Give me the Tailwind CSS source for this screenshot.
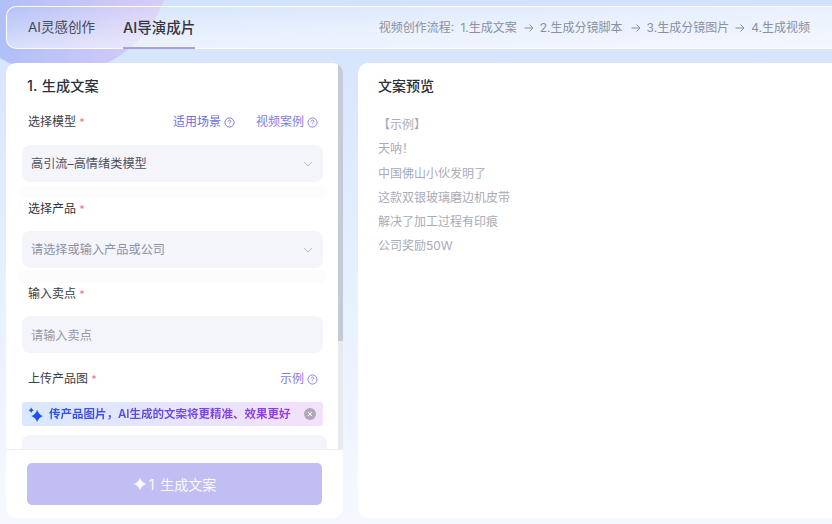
<!doctype html>
<html lang="zh"><head><meta charset="utf-8">
<script src="https://cdn.jsdelivr.net/npm/@tailwindcss/browser@4"></script>
</head>
<body class="m-0">
<div class="relative w-[832px] h-[524px] overflow-hidden bg-gradient-to-b from-[#d3e2fd] via-[#e6effe] to-[#f6f8ff] font-['Inter','Noto_Sans_CJK_SC',sans-serif] text-[12px] text-[#3a3d4a]">
  <div class="absolute left-[-55px] top-[-152px] w-[226px] h-[226px] rounded-full bg-gradient-to-r from-[#a2bbf8] to-[#d9cdf8]"></div>
  <div class="relative flex flex-col pl-[6px] pt-[6px] gap-[14px] h-full">
    <header class="flex items-center justify-between w-[840px] h-[43px] pl-[21px] pr-[36px] rounded-l-[10px] border border-r-0 border-white/90 bg-gradient-to-br from-white/5 via-white/50 to-white/70">
      <nav class="flex gap-[28px] h-full">
        <a class="flex items-center text-[13.5px] text-[#474a58]">AI灵感创作</a>
        <a class="relative flex items-center text-[14.5px] font-medium text-[#33353f]">AI导演成片<span class="absolute left-0 right-0 bottom-[-1px] h-[2px] bg-[#a3a1ec]"></span></a>
      </nav>
      <p class="flex items-center gap-[6px] text-[12px] text-[#8b8f9f]">
        <span class="[word-spacing:3px]">视频创作流程: 1.生成文案</span>
        <svg class="w-[10px] h-[10px] ml-[1px]" viewBox="0 0 10 10" fill="none" stroke="currentColor"><path d="M.5 5h8.500M5.500 1.500 9 5 5.500 8.500"/></svg>
        <span>2.生成分镜脚本</span>
        <svg class="w-[10px] h-[10px] ml-[2px]" viewBox="0 0 10 10" fill="none" stroke="currentColor"><path d="M.5 5h8.500M5.500 1.500 9 5 5.500 8.500"/></svg>
        <span>3.生成分镜图片</span>
        <svg class="w-[10px] h-[10px]" viewBox="0 0 10 10" fill="none" stroke="currentColor"><path d="M.5 5h8.500M5.500 1.500 9 5 5.500 8.500"/></svg>
        <span>4.生成视频</span>
      </p>
    </header>
    <main class="flex gap-[15px] w-[840px] h-[455px]">
      <section class="relative flex flex-col w-[337px] shrink-0 rounded-[10px] bg-white overflow-hidden">
        <div class="absolute right-0 top-0 w-[5px] h-[386px] bg-[#e7e9ee]"><div class="w-full h-[278px] bg-[#c5cad8]"></div></div>
        <div class="h-[386px] overflow-hidden pl-[16px] pr-[20px]">
          <h2 class="pl-[5px] pt-[14px] h-[44px] text-[14.200px] font-medium leading-[18px] text-[#2c2e38] [word-spacing:1px]">1. 生成文案</h2>
          <div class="flex justify-between items-center pl-[6px] pr-[5px] pt-[2px] h-[28px]">
            <span>选择模型 <span class="text-[#f56c6c] text-[10px]">*</span></span>
            <span class="flex gap-[21px] text-[12px] text-[#6d6ce0]">
              <span class="flex items-center gap-[3px]">适用场景<svg class="w-[11px] h-[11px]" viewBox="0 0 12 12" fill="none" stroke="currentColor"><circle cx="6" cy="6" r="5"/><path d="M4.600 4.800a1.400 1.400 0 1 1 2.200 1.100c-.5.3-.8.6-.8 1.100M6 8.600v.4"/></svg></span>
              <span class="flex items-center gap-[3px] text-[#7f7de6]">视频案例<svg class="w-[11px] h-[11px]" viewBox="0 0 12 12" fill="none" stroke="currentColor"><circle cx="6" cy="6" r="5"/><path d="M4.600 4.800a1.400 1.400 0 1 1 2.200 1.100c-.5.3-.8.6-.8 1.100M6 8.600v.4"/></svg></span>
            </span>
          </div>
          <div class="mt-[10px] flex items-center justify-between h-[37px] pl-[9px] pr-[10px] pt-[2px] rounded-[8px] bg-[#f4f5fb] text-[#4d5060] text-[12.200px]">
            <span>高引流–高情绪类模型</span>
            <svg class="w-[10px] h-[6px] text-[#b8bbc8] -mt-[2px]" viewBox="0 0 10 6" fill="none" stroke="currentColor"><path d="M1 .8 5 5 9 .8"/></svg>
          </div>
          <div class="mt-[4px] -mx-[4px] h-[12px] rounded-[8px] bg-[#fcfcfd]"></div>
          <div class="flex items-center pl-[6px] pt-[2px] h-[20px] text-[#33353f]"><span>选择产品 <span class="text-[#f56c6c] text-[10px]">*</span></span></div>
          <div class="mt-[13px] flex items-center justify-between h-[37px] pl-[9px] pr-[10px] pt-[2px] rounded-[8px] bg-[#f4f5fb] text-[#8e91a3] text-[12.200px]">
            <span>请选择或输入产品或公司</span>
            <svg class="w-[10px] h-[6px] text-[#b8bbc8] -mt-[2px]" viewBox="0 0 10 6" fill="none" stroke="currentColor"><path d="M1 .8 5 5 9 .8"/></svg>
          </div>
          <div class="mt-[2px] -mx-[4px] h-[13px] rounded-[8px] bg-[#fcfcfd]"></div>
          <div class="flex items-center pl-[6px] pt-[2px] h-[20px]"><span>输入卖点 <span class="text-[#f56c6c] text-[10px]">*</span></span></div>
          <div class="mt-[13px] flex items-center h-[37px] pl-[9px] pt-[3px] rounded-[8px] bg-[#f4f5fb] text-[#9497a8] text-[12.200px]">请输入卖点</div>
          <div class="mt-[16px] flex justify-between items-center pl-[6px] pr-[5px] h-[20px]">
            <span>上传产品图 <span class="text-[#f56c6c] text-[10px]">*</span></span>
            <span class="flex items-center gap-[3px] text-[12px] text-[#7f7de6]">示例<svg class="w-[11px] h-[11px]" viewBox="0 0 12 12" fill="none" stroke="currentColor"><circle cx="6" cy="6" r="5"/><path d="M4.600 4.800a1.400 1.400 0 1 1 2.200 1.100c-.5.3-.8.6-.8 1.100M6 8.600v.4"/></svg></span>
          </div>
          <div class="mt-[13px] flex items-center justify-between h-[24px] pl-[6px] pr-[7px] rounded-[3px] bg-gradient-to-r from-[#d9e8ff] to-[#f3e0fd]">
            <span class="flex items-center gap-[6px]">
              <svg class="w-[15px] h-[15px] text-[#1f4ff0]" viewBox="0 0 14 14" fill="currentColor"><path d="M8.500 2.500Q9.900 7.100 14 8.500 9.900 9.900 8.500 14 7.100 9.900 3 8.500 7.100 7.100 8.500 2.500Z"/><path d="M3 .5Q3.500 2.500 5.500 3 3.500 3.500 3 5.500 2.500 3.500.5 3 2.500 2.500 3 .5Z"/></svg>
              <span class="pt-[1px] text-[11.500px] font-semibold text-transparent bg-clip-text bg-gradient-to-r from-[#2450ee] to-[#9a35e8]">传产品图片，AI生成的文案将更精准、效果更好</span>
            </span>
            <span class="flex items-center justify-center w-[12px] h-[12px] rounded-full bg-[#aeaab8] text-white"><svg class="w-[6px] h-[6px]" viewBox="0 0 6 6" stroke="currentColor"><path d="m1 1 4 4M5 1 1 5"/></svg></span>
          </div>
          <div class="mt-[9px] -mr-[4px] h-[40px] rounded-[8px] bg-[#f4f5fb]"></div>
        </div>
        <footer class="relative flex-1 border-t border-[#eef0f4] bg-white pl-[21px] pr-[21px] pt-[13px]">
          <button class="flex items-center justify-center gap-[2px] w-[295px] h-[42px] rounded-[5px] bg-[#c0bef3] text-white/90 text-[14px]">
            <svg class="w-[14px] h-[14px]" viewBox="0 0 14 14" fill="currentColor"><path d="M7 .5Q8.400 5.600 13.500 7 8.400 8.400 7 13.500 5.600 8.400.5 7 5.600 5.600 7 .5Z"/></svg>
            <span class="[word-spacing:2px]">1 生成文案</span>
          </button>
        </footer>
      </section>
      <section class="flex-1 rounded-[10px] bg-white pl-[20px] pt-[14px]">
        <h2 class="text-[14px] font-medium leading-[18px] text-[#2c2e38]">文案预览</h2>
        <div class="mt-[18px] text-[12px] leading-[24.300px] text-[#a9abb9]">
          <p>【示例】</p><p>天呐！</p><p>中国佛山小伙发明了</p><p>这款双银玻璃磨边机皮带</p><p>解决了加工过程有印痕</p><p>公司奖励50W</p>
        </div>
      </section>
    </main>
  </div>
</div>
</body></html>
